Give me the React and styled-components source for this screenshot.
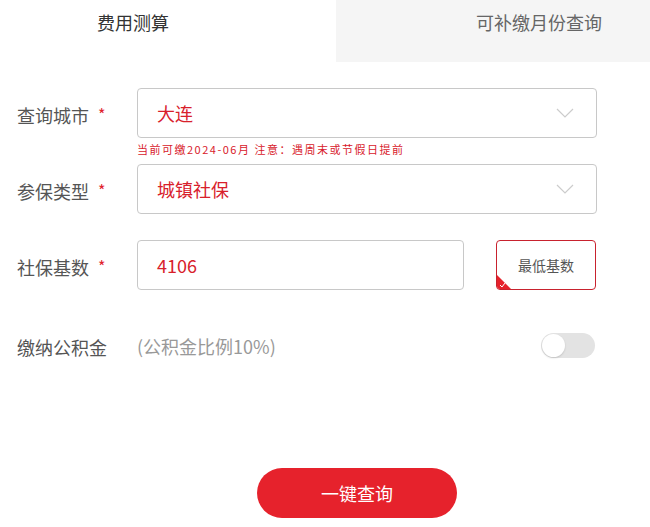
import React from "react";
import styled, { createGlobalStyle } from "styled-components";

const GlobalStyle = createGlobalStyle`
  * { box-sizing: border-box; }
  body {
    margin: 0;
    background: #fff;
    font-family: "Noto Sans CJK SC", "Noto Sans", sans-serif;
  }
`;

const App = () => {
  return (
    <Page>
      <GlobalStyle />
      <Tabs>
        <Tab active pad={97}>费用测算</Tab>
        <Tab pad={140}>可补缴月份查询</Tab>
      </Tabs>
      <Form>
        <Row>
          <Label>
            查询城市<Star>*</Star>
          </Label>
          <Field>
            <Select>
              <Value>大连</Value>
              <Chevron />
            </Select>
          </Field>
        </Row>
        <Hint>当前可缴2024-06月 注意：遇周末或节假日提前</Hint>
        <Row>
          <Label>
            参保类型<Star>*</Star>
          </Label>
          <Field>
            <Select>
              <Value>城镇社保</Value>
              <Chevron />
            </Select>
          </Field>
        </Row>
        <Row top={26}>
          <Label>
            社保基数<Star>*</Star>
          </Label>
          <Field>
            <Input>
              <Value>4106</Value>
            </Input>
            <MinButton>
              最低基数
              <Corner>
                <svg width="7" height="6" viewBox="0 0 7 6">
                  <path
                    d="M1 3 L3 5 L6 1"
                    fill="none"
                    stroke="#fff"
                    strokeWidth="1"
                  />
                </svg>
              </Corner>
            </MinButton>
          </Field>
        </Row>
        <Row top={30}>
          <Label>缴纳公积金</Label>
          <Field>
            <Muted>(公积金比例10%)</Muted>
            <Toggle>
              <Knob />
            </Toggle>
          </Field>
        </Row>
        <Footer>
          <Submit>一键查询</Submit>
        </Footer>
      </Form>
    </Page>
  );
};

const Chevron = () => (
  <svg width="18" height="10" viewBox="0 0 18 10">
    <path d="M1 1 L9 9 L17 1" fill="none" stroke="#ccc" strokeWidth="1.2" />
  </svg>
);

const Page = styled.div`
  width: 650px;
  height: 527px;
  overflow: hidden;
`;

const Tabs = styled.div`
  display: flex;
  height: 62px;
`;

const Tab = styled.div`
  width: ${(p) => (p.active ? "336px" : "314px")};
  background: ${(p) => (p.active ? "#fff" : "#f5f5f5")};
  color: ${(p) => (p.active ? "#333" : "#666")};
  font-size: 18px;
  line-height: 24px;
  padding: 10px 0 0 ${(p) => p.pad}px;
`;

const Form = styled.div`
  padding: 26px 53px 0 17px;
`;

const Row = styled.div`
  display: flex;
  align-items: center;
  height: 50px;
  margin-top: ${(p) => p.top || 0}px;
`;

const Label = styled.div`
  width: 120px;
  flex-shrink: 0;
  font-size: 18px;
  color: #555;
  display: flex;
  align-items: center;
  padding-top: 4px;
`;

const Star = styled.span`
  color: #e0222d;
  font-size: 16px;
  margin-left: 9px;
  position: relative;
  top: -1px;
`;

const Field = styled.div`
  flex: 1;
  display: flex;
  align-items: center;
  justify-content: space-between;
  height: 100%;
`;

const Select = styled.div`
  flex: 1;
  height: 50px;
  border: 1px solid #c8c8c8;
  border-radius: 4px;
  display: flex;
  align-items: center;
  justify-content: space-between;
  padding: 0 22px 0 19px;
`;

const Input = styled(Select)`
  flex: none;
  width: 327px;
`;

const Value = styled.span`
  color: #d8202b;
  font-size: 18px;
`;

const Hint = styled.div`
  margin: 4px 0 8px 120px;
  font-size: 11px;
  line-height: 14px;
  letter-spacing: 1.5px;
  color: #d8202b;
`;

const MinButton = styled.div`
  position: relative;
  width: 100px;
  height: 50px;
  margin-right: 1px;
  border: 1px solid #c8222e;
  border-radius: 4px;
  overflow: hidden;
  display: flex;
  align-items: center;
  justify-content: center;
  font-size: 14px;
  color: #555;
`;

const Corner = styled.div`
  position: absolute;
  left: 0;
  bottom: 0;
  width: 0;
  height: 0;
  border-style: solid;
  border-color: transparent;
  border-left-color: #e6222c;
  border-bottom-color: #e6222c;
  border-width: 14px 0 0 14px;
  border-top-color: transparent;

  svg {
    position: absolute;
    left: -12px;
    top: -7px;
  }
`;

const Muted = styled.span`
  font-size: 18px;
  color: #999;
  padding-top: 2px;
`;

const Toggle = styled.div`
  position: relative;
  width: 54px;
  height: 25px;
  margin-right: 2px;
  border-radius: 13px;
  background: #e3e3e3;
`;

const Knob = styled.div`
  position: absolute;
  left: 1px;
  top: 1px;
  width: 23px;
  height: 23px;
  border-radius: 50%;
  background: #fff;
  box-shadow: 0 1px 2px rgba(0, 0, 0, 0.15);
`;

const Footer = styled.div`
  display: flex;
  padding-left: 240px;
  margin-top: 98px;
`;

const Submit = styled.div`
  width: 200px;
  height: 50px;
  border-radius: 25px;
  background: #e6222c;
  color: #fff;
  font-size: 18px;
  display: flex;
  align-items: center;
  justify-content: center;
`;

export default App;
